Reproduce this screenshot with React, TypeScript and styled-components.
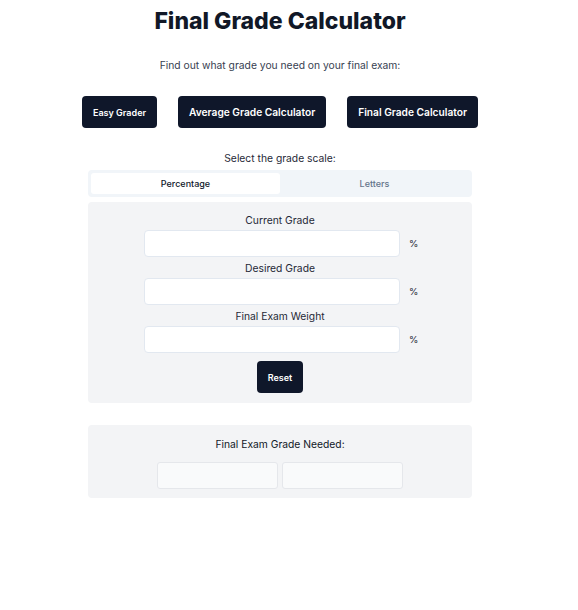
import { useState } from 'react';
import styled, { createGlobalStyle } from 'styled-components';

const GlobalStyle = createGlobalStyle`
  body {
    margin: 0;
    background: #ffffff;
    font-family: Inter, "Noto Sans", sans-serif;
    color: #0f172a;
  }
`;

const NAV_LINKS = ['Easy Grader', 'Average Grade Calculator', 'Final Grade Calculator'];

const FIELDS = ['Current Grade', 'Desired Grade', 'Final Exam Weight'];

export default function App() {
  const [scale, setScale] = useState<'percentage' | 'letters'>('percentage');
  const [values, setValues] = useState<string[]>(['', '', '']);

  const setValue = (index: number, value: string) => {
    setValues((prev) => prev.map((v, i) => (i === index ? value : v)));
  };

  return (
    <>
      <GlobalStyle />
      <SPage>
        <STitle>Final Grade Calculator</STitle>
        <SSubtitle>Find out what grade you need on your final exam:</SSubtitle>

        <SNav>
          {NAV_LINKS.map((link, i) => (
            <SNavButton key={link} small={i === 0}>
              {link}
            </SNavButton>
          ))}
        </SNav>

        <SScaleLabel>Select the grade scale:</SScaleLabel>
        <STabs>
          <STab active={scale === 'percentage'} onClick={() => setScale('percentage')}>
            Percentage
          </STab>
          <STab active={scale === 'letters'} onClick={() => setScale('letters')}>
            Letters
          </STab>
        </STabs>

        <SPanel>
          {FIELDS.map((field, i) => (
            <SField key={field}>
              <SFieldLabel>{field}</SFieldLabel>
              <SInputRow>
                <SInput value={values[i]} onChange={(e) => setValue(i, e.target.value)} />
                <SUnit>%</SUnit>
              </SInputRow>
            </SField>
          ))}
          <SResetButton onClick={() => setValues(['', '', ''])}>Reset</SResetButton>
        </SPanel>

        <SResultPanel>
          <SResultLabel>Final Exam Grade Needed:</SResultLabel>
          <SResultRow>
            <SResultBox />
            <SResultBox />
          </SResultRow>
        </SResultPanel>
      </SPage>
    </>
  );
}

const SPage = styled.div`
  width: 560px;
  display: flex;
  flex-direction: column;
  align-items: center;
  padding-top: 6px;
`;

const STitle = styled.h1`
  margin: 0;
  font-size: 23px;
  line-height: 30px;
  font-weight: 800;
  color: #111827;
`;

const SSubtitle = styled.p`
  margin: 21px 0 0;
  font-size: 10.3px;
  line-height: 16px;
  color: #374151;
`;

const SNav = styled.div`
  display: flex;
  gap: 21px;
  margin-top: 23px;
`;

const SNavButton = styled.button<{ small: boolean }>`
  height: 32px;
  padding: 0 11px;
  border: none;
  border-radius: 4px;
  background: #0f172a;
  color: #ffffff;
  font-family: Inter, "Noto Sans", sans-serif;
  font-size: ${(props) => (props.small ? '9px' : '10.2px')};
  font-weight: 600;
  cursor: pointer;
`;

const SScaleLabel = styled.div`
  margin-top: 22px;
  font-size: 10.3px;
  line-height: 16px;
  color: #1f2937;
`;

const STabs = styled.div`
  box-sizing: border-box;
  width: 384px;
  height: 27px;
  margin-top: 4px;
  padding: 3px;
  display: grid;
  grid-template-columns: 1fr 1fr;
  background: #f1f5f9;
  border-radius: 4px;
`;

const STab = styled.button<{ active: boolean }>`
  border: none;
  border-radius: 3px;
  background: ${(props) => (props.active ? '#ffffff' : 'transparent')};
  color: ${(props) => (props.active ? '#0f172a' : '#64748b')};
  font-family: Inter, "Noto Sans", sans-serif;
  font-size: 9px;
  font-weight: 500;
  padding: 0;
  cursor: pointer;
`;

const SPanel = styled.div`
  box-sizing: border-box;
  width: 384px;
  margin-top: 5px;
  padding: 11px 0 10px;
  display: flex;
  flex-direction: column;
  align-items: center;
  background: #f3f4f6;
  border-radius: 4px;
`;

const SField = styled.div`
  display: flex;
  flex-direction: column;
  align-items: center;
  margin-bottom: 4px;
`;

const SFieldLabel = styled.label`
  font-size: 10.3px;
  line-height: 14px;
  color: #1f2937;
  margin-bottom: 3px;
`;

const SInputRow = styled.div`
  display: flex;
  align-items: center;
  gap: 9px;
  margin-right: -3px;
`;

const SInput = styled.input`
  box-sizing: border-box;
  width: 256px;
  height: 27px;
  border: 1px solid #e2e8f0;
  border-radius: 4px;
  background: #ffffff;
  outline: none;
  font-family: Inter, "Noto Sans", sans-serif;
  font-size: 11px;
  padding: 0 8px;
`;

const SUnit = styled.span`
  width: 10px;
  font-size: 9.5px;
  color: #1f2937;
`;

const SResetButton = styled.button`
  height: 32px;
  padding: 0 11px;
  margin-top: 4px;
  border: none;
  border-radius: 4px;
  background: #0f172a;
  color: #ffffff;
  font-family: Inter, "Noto Sans", sans-serif;
  font-size: 9px;
  font-weight: 600;
  cursor: pointer;
`;

const SResultPanel = styled.div`
  box-sizing: border-box;
  width: 384px;
  margin-top: 22px;
  padding: 11px 0 9px;
  display: flex;
  flex-direction: column;
  align-items: center;
  background: #f3f4f6;
  border-radius: 4px;
`;

const SResultLabel = styled.div`
  font-size: 10.3px;
  line-height: 16px;
  color: #111827;
`;

const SResultRow = styled.div`
  display: flex;
  gap: 4px;
  margin-top: 10px;
`;

const SResultBox = styled.div`
  box-sizing: border-box;
  width: 121px;
  height: 27px;
  border: 1px solid #e5e7eb;
  border-radius: 3px;
  background: #f9fafb;
`;
